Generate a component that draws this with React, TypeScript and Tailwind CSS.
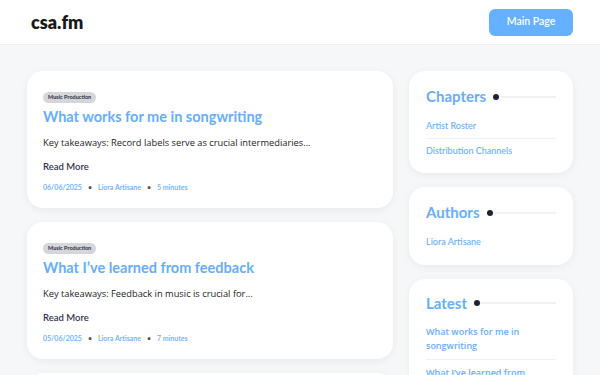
import React from "react";

const head = { fontFamily: "Lato, 'Noto Sans', sans-serif" };
const body = { fontFamily: "'Open Sans', 'Noto Sans', sans-serif" };

const posts = [
  {
    title: "What works for me in songwriting",
    excerpt: "Key takeaways: Record labels serve as crucial intermediaries...",
    date: "06/06/2025",
    time: "5 minutes",
  },
  {
    title: "What I’ve learned from feedback",
    excerpt: "Key takeaways: Feedback in music is crucial for...",
    date: "05/06/2025",
    time: "7 minutes",
  },
  {
    title: "What I’ve learned from collaboration",
    excerpt: "Key takeaways: Collaboration in music is essential...",
    date: "04/06/2025",
    time: "6 minutes",
  },
];

function Heading({ children }: { children: React.ReactNode }) {
  return (
    <div className="flex items-center gap-[7px]">
      <h3 className="text-[15px] font-bold text-[#66aefc] leading-none" style={head}>
        {children}
      </h3>
      <span className="w-[6px] h-[6px] rounded-full bg-[#1e2235] shrink-0" />
      <span className="flex-1 h-[2px] bg-[#f1f2f4] -ml-[7px]" />
    </div>
  );
}

export default function App() {
  return (
    <div className="min-h-screen bg-[#f6f7f9]">
      <header className="h-[45px] bg-white border-b border-[#eceef0] flex items-center justify-between px-[31px]">
        <span className="text-[18px] font-extrabold text-[#1a1a1a]" style={head}>
          csa.fm
        </span>
        <button className="w-[84px] h-[27px] rounded-md bg-[#66b1ff] text-white text-[10.5px] font-semibold -mr-[4px]" style={head}>
          Main Page
        </button>
      </header>
      <main className="flex gap-4 px-[27px] pt-[26px]">
        <div className="w-[366px] flex flex-col gap-[14px]">
          {posts.map((p) => (
            <article
              key={p.title}
              className="bg-white rounded-2xl shadow-[0_2px_8px_rgba(0,0,0,0.06)] px-4 pt-[21px] pb-[16px]"
            >
              <div
                className="w-fit rounded-full bg-[#d4d6dc] text-[#2a2d3a] text-[5.5px] font-bold px-[5px] py-[2px] leading-[7px]"
                style={head}
              >
                Music Production
              </div>
              <h2 className="mt-[4px] text-[14.5px] font-bold text-[#66aefc] leading-[20px]" style={head}>
                {p.title}
              </h2>
              <p className="mt-[9px] text-[9.3px] text-[#1c1c1c] leading-[14px]" style={body}>
                {p.excerpt}
              </p>
              <div className="mt-[11px] text-[9.5px] font-semibold text-[#34344e] leading-[12px]" style={head}>
                Read More
              </div>
              <div className="mt-[9px] flex items-center gap-[6px] text-[7px] font-semibold text-[#66aefc] leading-[10px]" style={head}>
                <span>{p.date}</span>
                <span className="text-[#555]">•</span>
                <span>Liora Artisane</span>
                <span className="text-[#555]">•</span>
                <span>{p.time}</span>
              </div>
            </article>
          ))}
        </div>
        <aside className="w-[164px] flex flex-col gap-[14px]">
          <section className="bg-white rounded-2xl shadow-[0_2px_8px_rgba(0,0,0,0.06)] px-[17px] pt-[18px] pb-[16px]">
            <Heading>Chapters</Heading>
            <div className="mt-[15px] text-[9px] font-medium text-[#66aefc]" style={head}>
              <div className="pb-[5px] border-b border-[#eef0f2]">Artist Roster</div>
              <div className="pt-[5px]">Distribution Channels</div>
            </div>
          </section>
          <section className="bg-white rounded-2xl shadow-[0_2px_8px_rgba(0,0,0,0.06)] px-[17px] pt-[18px] pb-[16px]">
            <Heading>Authors</Heading>
            <div className="mt-[15px] text-[9px] font-medium text-[#66aefc]" style={head}>
              Liora Artisane
            </div>
          </section>
          <section className="bg-white rounded-2xl shadow-[0_2px_8px_rgba(0,0,0,0.06)] px-[17px] pt-[17px] pb-[14px]">
            <Heading>Latest</Heading>
            <div className="mt-[14px] text-[9px] font-semibold text-[#66aefc] leading-[14px]" style={body}>
              <div className="pb-[6px] border-b border-[#eef0f2]">What works for me in songwriting</div>
              <div className="pt-[6px]">What I’ve learned from feedback</div>
            </div>
          </section>
        </aside>
      </main>
    </div>
  );
}
